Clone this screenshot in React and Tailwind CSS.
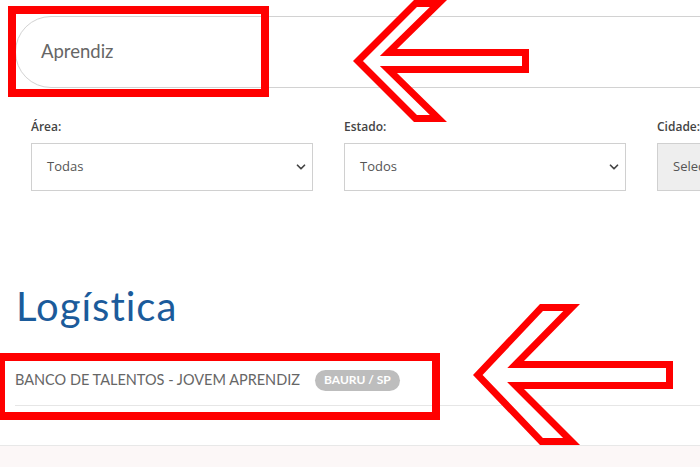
import { ChevronDown } from "lucide-react";

// filter selects under the search field
const filters = [
  { label: "Área:", value: "Todas" },
  { label: "Estado:", value: "Todos" },
  { label: "Cidade:", value: "Selecione uma cidade", disabled: true },
];

// red outline arrows drawn on top of the screenshot
const arrowTop = "353,61 414,0 447,0 397,49 529,49 529,73 397,73 447,122 414,122";
const arrowBottom = "473,375 540,304 580,304 524,361 673,361 673,389 524,389 580,445 540,445";

function Arrow({ id, points }) {
  return (
    <g>
      <clipPath id={id}>
        <polygon points={points} />
      </clipPath>
      <polygon
        points={points}
        fill="white"
        stroke="#ff0000"
        strokeWidth="14"
        clipPath={`url(#${id})`}
      />
    </g>
  );
}

const App = () => {
  return (
    <div className="relative h-[467px] w-[700px] overflow-hidden bg-white font-['Lato',sans-serif]">
      {/* search */}
      <div className="pl-[15px] pt-4">
        <div className="flex h-[72px] w-[760px] items-center rounded-l-full border border-[#d2d2d2] pl-[25px]">
          <span className="text-[18.5px] text-[#666]">Aprendiz</span>
        </div>
      </div>

      {/* filters */}
      <div className="mt-[31px] flex gap-[31px] pl-[31px] font-['Open_Sans',sans-serif]">
        {filters.map((f) => (
          <div key={f.label} className="w-[282px] shrink-0">
            <p className="mb-2 text-xs leading-4 font-semibold text-[#444]">{f.label}</p>
            <div
              className={
                f.disabled
                  ? "flex h-12 items-center justify-between overflow-hidden border border-[#d0d0d0] bg-[#eeeeee] pl-[15px] pr-1"
                  : "flex h-12 items-center justify-between overflow-hidden border border-[#d0d0d0] bg-white pl-[15px] pr-1"
              }
            >
              <span className="whitespace-nowrap text-[13px] text-[#555]">{f.value}</span>
              <ChevronDown size={14} strokeWidth={3} className="shrink-0 text-[#444]" />
            </div>
          </div>
        ))}
      </div>

      <h2 className="mt-[91px] pl-4 text-[40px] leading-[48px] tracking-[1px] text-[#1b5b9b]">Logística</h2>

      {/* job row */}
      <div className="ml-[15px] mt-[25px] flex h-[51px] items-center border-b border-[#e6e6e6]">
        <span className="text-[14.5px] text-[#666]">BANCO DE TALENTOS - JOVEM APRENDIZ</span>
        <span className="ml-[15px] flex h-[21px] items-center rounded-full bg-[#bdbdbd] px-[9px] text-xs font-bold text-white">
          BAURU / SP
        </span>
      </div>

      <div className="mt-[39px] h-6 border-t border-[#e8e8e8] bg-[#fcf7f7]" />

      {/* annotations */}
      <svg className="pointer-events-none absolute inset-0" width="700" height="467">
        <rect x="12" y="10" width="253" height="83" fill="none" stroke="#ff0000" strokeWidth="8" />
        <rect x="1" y="357" width="435" height="59" fill="none" stroke="#ff0000" strokeWidth="8" />
        <Arrow id="a1" points={arrowTop} />
        <Arrow id="a2" points={arrowBottom} />
      </svg>
    </div>
  );
};

export default App;
